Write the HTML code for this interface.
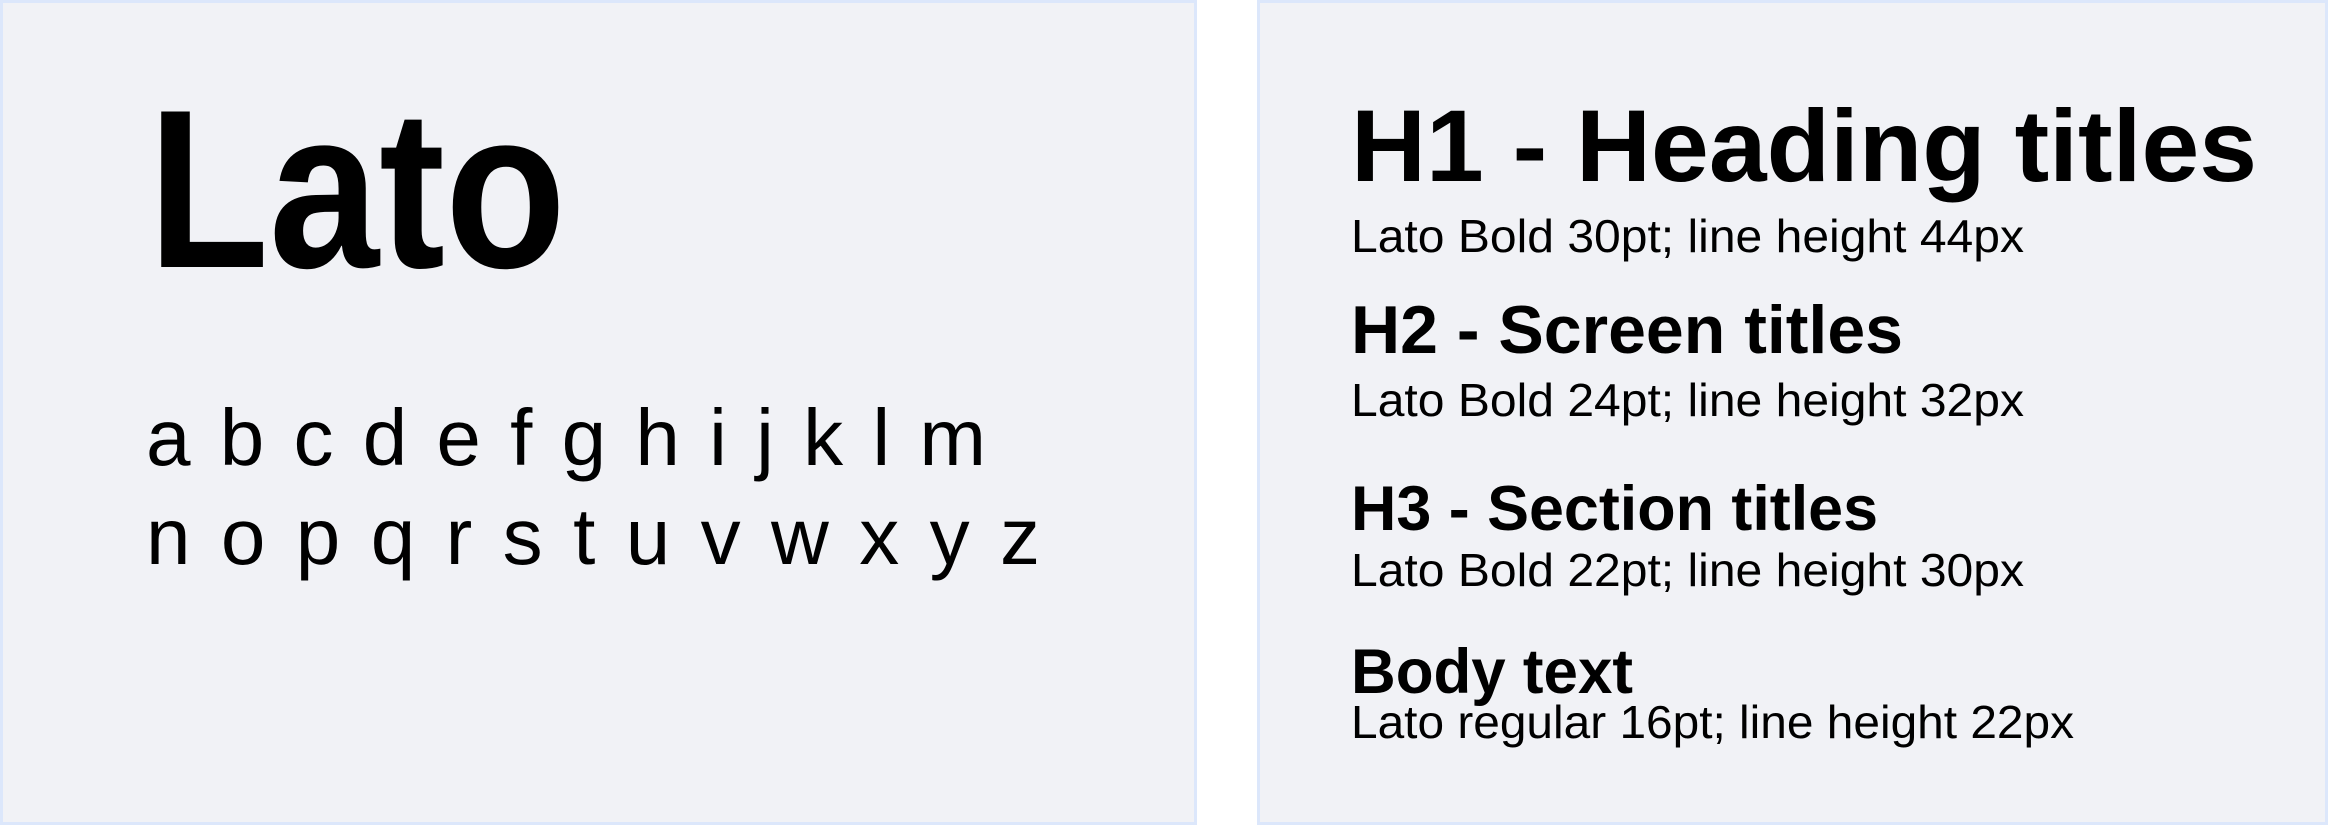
<!DOCTYPE html>
<html><head><meta charset="utf-8"><style>
html,body{margin:0;padding:0;background:#fff;width:2328px;height:825px;overflow:hidden}
.p{position:absolute;top:0;height:825px;box-sizing:border-box;border:3px solid #dce7fb;background:#f1f2f6}
svg{position:absolute;left:0;top:0}
text{font-family:"Liberation Sans",sans-serif;fill:#000}
.b{font-weight:700}
</style></head><body>
<div class="p" style="left:0;width:1197px"></div>
<div class="p" style="left:1257px;width:1071px"></div>
<svg width="2328" height="825" viewBox="0 0 2328 825">
<text class="b" x="148" y="267" font-size="226" textLength="418" lengthAdjust="spacingAndGlyphs">Lato</text>
<text x="146" y="465" font-size="80" textLength="840" lengthAdjust="spacing">a b c d e f g h i j k l m</text>
<text x="146" y="564" font-size="80" textLength="894" lengthAdjust="spacing">n o p q r s t u v w x y z</text>
<text class="b" x="1351" y="181" font-size="102" textLength="906" lengthAdjust="spacingAndGlyphs">H1 - Heading titles</text>
<text x="1351" y="252" font-size="46" textLength="673" lengthAdjust="spacingAndGlyphs">Lato Bold 30pt; line height 44px</text>
<text class="b" x="1351" y="353" font-size="68" textLength="552" lengthAdjust="spacingAndGlyphs">H2 - Screen titles</text>
<text x="1351" y="416" font-size="46" textLength="673" lengthAdjust="spacingAndGlyphs">Lato Bold 24pt; line height 32px</text>
<text class="b" x="1351" y="530" font-size="63" textLength="527" lengthAdjust="spacingAndGlyphs">H3 - Section titles</text>
<text x="1351" y="586" font-size="46" textLength="673" lengthAdjust="spacingAndGlyphs">Lato Bold 22pt; line height 30px</text>
<text class="b" x="1351" y="693" font-size="63" textLength="282" lengthAdjust="spacingAndGlyphs">Body text</text>
<text x="1351" y="738" font-size="46" textLength="723" lengthAdjust="spacingAndGlyphs">Lato regular 16pt; line height 22px</text>
</svg>
</body></html>
